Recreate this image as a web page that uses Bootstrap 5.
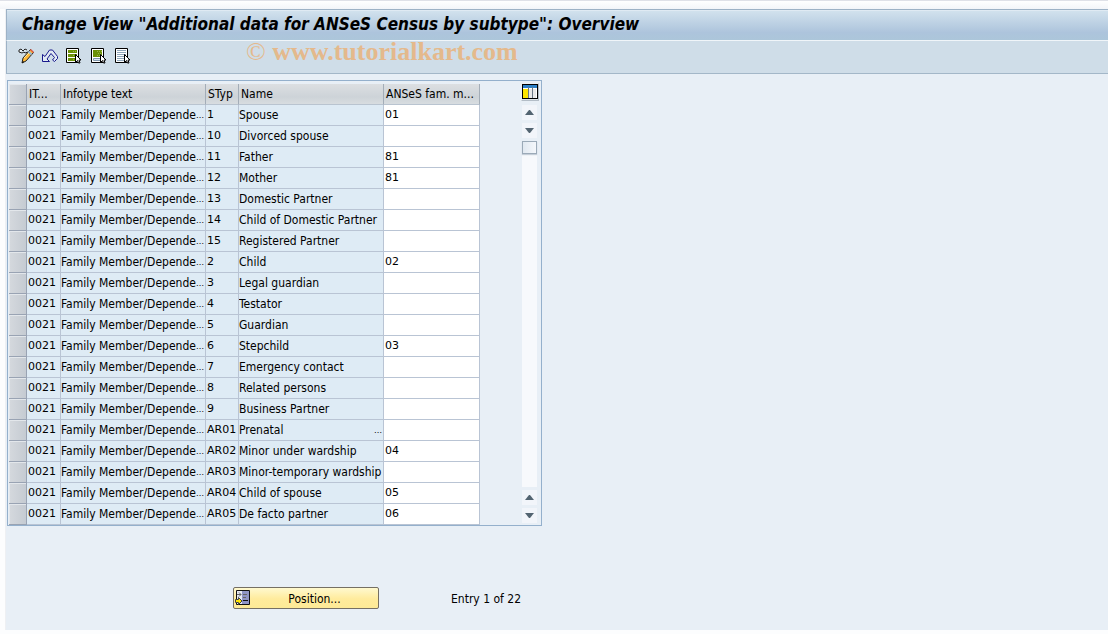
<!DOCTYPE html>
<html lang="en">
<head>
<meta charset="utf-8">
<meta name="viewport" content="width=device-width, initial-scale=1">
<title>Change View: Overview</title>
<link href="https://cdn.jsdelivr.net/npm/bootstrap@5.3.0/dist/css/bootstrap.min.css" rel="stylesheet">
<style>
body{font-family:"DejaVu Sans Condensed","DejaVu Sans",Tahoma,sans-serif;font-stretch:condensed;font-size:12px;line-height:16px;color:#000;background:#fcfdfe}
.top-strip{height:9px;border-top:1px solid #dfe1e8;background:linear-gradient(#fff,#f3f5f9)}
.workspace{background:#e8eff6;margin-left:6px;min-height:calc(100vh - 13px);box-shadow:0 1px #d9dee3,-1px 0 #eef0f3}
.title-bar{height:32px;border:1px solid #9db2c6;border-right:0;border-bottom-color:#f0f5f9;background:linear-gradient(#d3e3ee,#adc4dc 75%,#acc6da);box-shadow:inset 0 1px #dfeaf3}
.title-bar h1{font-size:17px;line-height:28px;font-weight:700;font-style:italic;margin:0;padding-left:15px}
.tool-bar{height:33px;background:#cfdde8;border-left:1px solid #9db2c6;border-bottom:1px solid #a3b7c8;padding:0 0 2px 11px}
.tool{width:16px;height:16px;padding:0;border:0;background:none;display:block}
.tool svg,.pos-btn svg,.config-btn svg{display:block}
.brand-note{font-family:"Liberation Serif",serif;font-size:26px;line-height:24px;font-weight:700;color:#e4b98c;margin-left:116px;padding-bottom:8px}
.brand-note span{font-weight:400}
.grid-frame{width:535px;margin:6px 0 0 1px;padding:2px 1px 0 1px;border:1px solid #94b0cc}
.data-grid{width:471px;margin-top:1px;table-layout:fixed;border-collapse:separate;border-spacing:0}
.data-grid th{height:21px;padding:0 2px;font-weight:400;background:linear-gradient(#dcdfe2,#cdd3d8 65%,#d8dde0);border-right:1px solid #a3adb8;border-bottom:1px solid #b9c4d0;white-space:nowrap;overflow:hidden}
.data-grid td{height:21px;padding:0 1px 0 0;background:#deebf5;border-right:1px solid #b9c4d4;border-bottom:1px solid #b9c4d4;white-space:nowrap;overflow:hidden;line-height:20px}
.data-grid td.code,.data-grid input{font-family:"DejaVu Sans",sans-serif;font-stretch:normal;font-size:11px}
.data-grid td.code{padding-left:1px}
.data-grid td.entry{background:#fff;padding:0}
.data-grid input{display:block;width:100%;height:20px;border:0;padding:0 1px;background:#fff;color:#000}
.data-grid td.pick,.data-grid th.pick{padding:0;border-right-color:#99a3b3;border-bottom-color:#99a3b3}
.pick button{display:block;width:100%;height:20px;border:1px solid #e3e7eb;border-width:1px 0 0 1px;padding:0;background:linear-gradient(90deg,#d4d8dd,#c5cbd2)}
.more{font-size:9px}
.side{width:19px}
.config-btn{width:18px;height:18px;padding:0;border:1px solid #b3bdc7;border-top-color:#eef1f3;border-left-color:#eef1f3;background:#dfe4e8}
.scroller{gap:3px;padding:4px 0 2px 1px}
.step{width:15px;height:15px;padding:0;border:0;background:#f2f5fa;display:flex;align-items:center;justify-content:center}
.track{width:15px;background:#f7f9fc}
.thumb{width:15px;height:13px;border:1px solid #9baab8;background:linear-gradient(90deg,#e1e9f1,#f4f7fb);box-shadow:0 1px 1px #c5ced8}
.foot{margin:61px 0 0 227px}
.pos-btn{width:146px;height:22px;padding:0 0 0 1px;border:1px solid #756f63;border-radius:2px;background:linear-gradient(#fff9cf,#ffeb9c 55%,#fdea96);color:#000}
.count{margin-left:72px}
.pos-btn span,.count{padding-top:2px}
</style>
</head>
<body>
<div class="top-strip"></div>
<main class="workspace">
  <header class="title-bar"><h1>Change View "Additional data for ANSeS Census by subtype": Overview</h1></header>
  <div class="tool-bar d-flex align-items-center" role="toolbar" aria-label="Actions">
    <div class="d-flex gap-2">
      <button class="tool" type="button" aria-label="Display or change"><svg width="16" height="16" viewBox="0 0 16 16"><path d="M1 4V2l2-1 2 2 2-2 2 1M1 4l3 1 2-1 1 1 3-1" fill="#eef3f6" stroke="#222"/><path d="M12.500 1.500l3 3L8 13l-4 2 1-5z" fill="#ffb938" stroke="#222"/><path d="M12 2l1-1 3 3-1 1z" fill="#d95644"/><path d="M10.500 3.500l3 3" stroke="#96b9d6" stroke-width="2"/><path d="M6 10l5-5" stroke="#ffe79c"/><path d="M4 15l1-2 1 1z"/></svg></button>
      <button class="tool" type="button" aria-label="Undo"><svg width="16" height="16" viewBox="0 0 16 16"><path d="M.5 6.500v7h7l-2.500-2.500 4-5.500 3.500 4-2 2.500 2 1.500 3-3v-2l-5-6.500h-3L3 8.500z" fill="#e2eaf3" stroke="#19198c"/></svg></button>
      <button class="tool" type="button" aria-label="Select all"><svg width="16" height="16" viewBox="0 0 16 16"><path d="M.5.5h12v14H.5z" fill="#fff" stroke="#000"/><path d="M2 2h9v3H2zM2 6h9v3H2zM2 10h9v3H2z" fill="#6b9107"/><path d="M7 3.500h4M7 7.500h4M7 11.500h4" stroke="#9ab64c" stroke-dasharray="1"/><path d="M9.500 6.500v8l2-2 1 2.500h1.500l-1-3h2z" fill="#fff" stroke="#000"/></svg></button>
      <button class="tool" type="button" aria-label="Select block"><svg width="16" height="16" viewBox="0 0 16 16"><path d="M1.500.5h12v14h-12z" fill="#fff" stroke="#000"/><path d="M3 2h9v7H3z" fill="#6b9107"/><path d="M7 3.500h5M8 5.500h4M7 7.500h5" stroke="#9ab64c" stroke-dasharray="1"/><path d="M3.500 10.500h8v2h-8z" fill="#dce6ee" stroke="#8198ad"/><path d="M10.500 6.500v8l2-2 1 2.500h1.500l-1-3h2z" fill="#fff" stroke="#000"/></svg></button>
      <button class="tool" type="button" aria-label="Deselect all"><svg width="16" height="16" viewBox="0 0 16 16"><path d="M1.500.5h12v14h-12z" fill="#fff" stroke="#000"/><path d="M3 2.500h9M3 4.500h9M3 6.500h9M3 8.500h9M3 10.500h9M3 12.500h9" stroke="#8fa6ba"/><path d="M10.500 6.500v8l2-2 1 2.500h1.500l-1-3h2z" fill="#fff" stroke="#000"/></svg></button>
    </div>
    <div class="brand-note"><span>©</span> www.tutorialkart.com</div>
  </div>
  <section class="grid-frame d-flex justify-content-between">
    <table class="data-grid">
      <colgroup><col style="width:18px"><col style="width:34px"><col style="width:145px"><col style="width:33px"><col style="width:145px"><col style="width:96px"></colgroup>
      <thead><tr><th class="pick"><button type="button" aria-label="Select all rows"></button></th><th>IT...</th><th>Infotype text</th><th>STyp</th><th>Name</th><th>ANSeS fam. m...</th></tr></thead>
      <tbody id="rows"></tbody>
    </table>
    <div class="side d-flex flex-column">
      <button class="config-btn" type="button" aria-label="Table settings"><svg width="16" height="16" viewBox="0 0 16 16"><path d="M0 0h16v15H0z"/><path d="M1 1h14v13H1z" fill="#fff"/><path d="M1 1h14v3H1z" fill="#2b7fc6"/><path d="M1 5h5v9H1z" fill="#ffe600"/><path d="M7 5h3v9H7zM11 5h3v9h-3z" fill="#e8e8e8"/><path d="M6.500 3v11M10.500 3v11" stroke="#6a7785"/></svg></button>
      <div class="scroller d-flex flex-column flex-grow-1">
        <button class="step" type="button" aria-label="Scroll up"><svg width="9" height="5"><path d="M0 5l4-5h1l4 5z" fill="#536471"/></svg></button>
        <button class="step" type="button" aria-label="Scroll down"><svg width="9" height="5"><path d="M0 0l4 5h1l4-5z" fill="#536471"/></svg></button>
        <div class="track flex-grow-1"><div class="thumb"></div></div>
        <button class="step" type="button" aria-label="Page up"><svg width="9" height="5"><path d="M0 5l4-5h1l4 5z" fill="#536471"/></svg></button>
        <button class="step" type="button" aria-label="Page down"><svg width="9" height="5"><path d="M0 0l4 5h1l4-5z" fill="#536471"/></svg></button>
      </div>
    </div>
  </section>
  <div class="foot d-flex align-items-center">
    <button class="pos-btn d-flex align-items-center" type="button"><svg width="16" height="16" viewBox="0 0 16 16"><path d="M1.500.5h13v14h-13z" fill="#e5e9f4" stroke="#111"/><path d="M7 1h7v13H7z" fill="#8f94c6"/><path d="M2 4.500h4M4 2.500l2 2-2 2M8 4.500h4M8 7.500h3" stroke="#666" fill="none"/><path d="M8 10.500h5" stroke="#111"/><path d="M.5 9.500h3v-2L7 11l-3.500 3.500v-2h-3z" fill="#ffe500" stroke="#444"/></svg><span class="flex-grow-1 text-center">Position...</span></button>
    <span class="count">Entry 1 of 22</span>
  </div>
</main>
<script>
const rows = [
 ["1","Spouse","01"],["10","Divorced spouse",""],["11","Father","81"],["12","Mother","81"],["13","Domestic Partner",""],
 ["14","Child of Domestic Partner",""],["15","Registered Partner",""],["2","Child","02"],["3","Legal guardian",""],["4","Testator",""],
 ["5","Guardian",""],["6","Stepchild","03"],["7","Emergency contact",""],["8","Related persons",""],["9","Business Partner",""],
 ["AR01","Prenatal","",true],["AR02","Minor under wardship","04"],["AR03","Minor-temporary wardship",""],["AR04","Child of spouse","05"],["AR05","De facto partner","06"]
];
const more = '<span class="more">…</span>';
document.getElementById("rows").innerHTML = rows.map(([type, name, member, cut]) =>
 `<tr><td class="pick"><button type="button" aria-label="Select ${name}"></button></td><td class="code">0021</td>` +
 `<td><div class="d-flex justify-content-between"><span>Family Member/Depende</span>${more}</div></td><td class="code">${type}</td>` +
 `<td><div class="d-flex justify-content-between"><span>${name}</span>${cut ? more : ""}</div></td>` +
 `<td class="entry"><input type="text" value="${member}" aria-label="Family member code for ${name}"></td></tr>`).join("");
</script>
<script src="https://cdn.jsdelivr.net/npm/bootstrap@5.3.0/dist/js/bootstrap.bundle.min.js"></script>
</body>
</html>
